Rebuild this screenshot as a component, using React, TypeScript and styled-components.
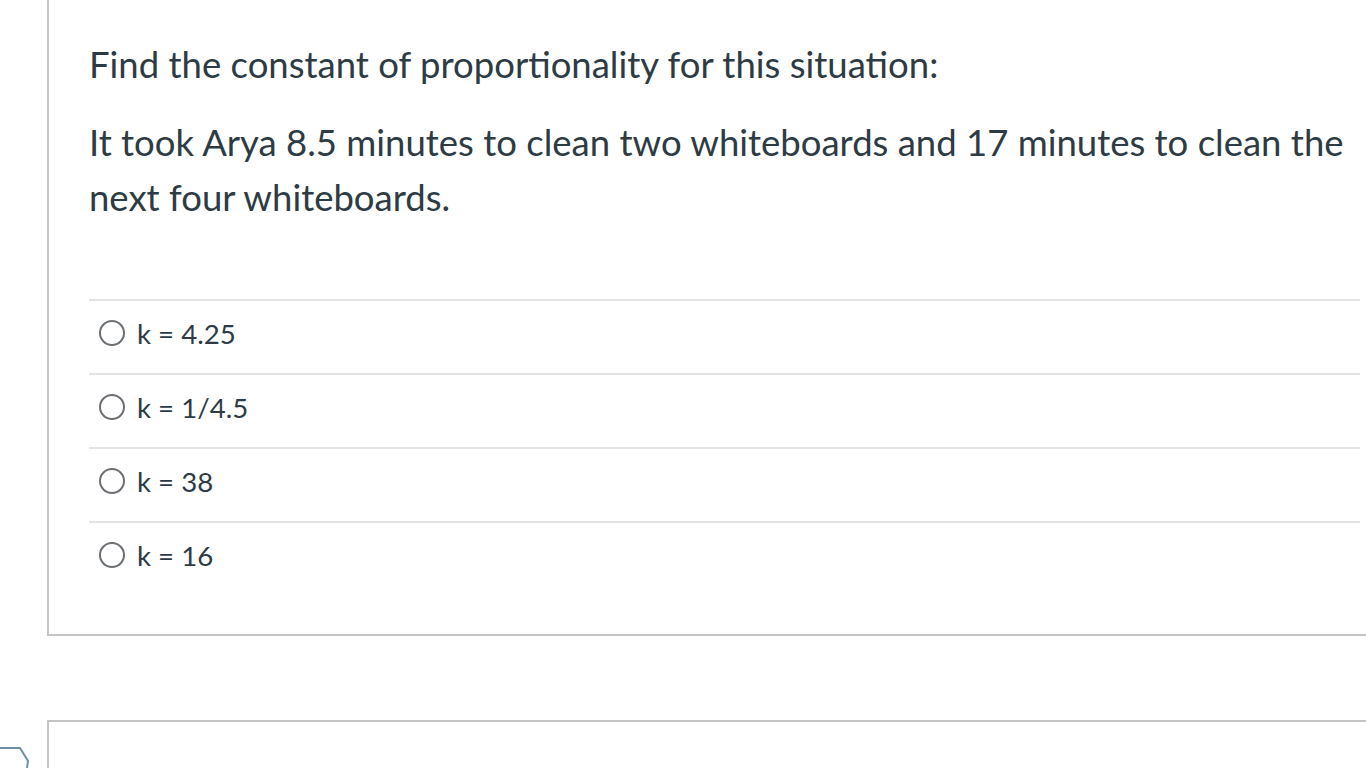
import React from "react";
import styled, { createGlobalStyle } from "styled-components";

const Global = createGlobalStyle`
  html, body { margin: 0; padding: 0; background: #ffffff; }
  body { font-family: Lato, "Open Sans", sans-serif; color: #2d3b45; overflow: hidden; }
`;

const Page = styled.div`
  position: relative;
  width: 1366px;
  height: 768px;
  overflow: hidden;
  padding-left: 47px;
  box-sizing: border-box;
`;

const Card = styled.section`
  border: 2px solid #c4c4c4;
  border-top: 0;
  border-right: 0;
  box-sizing: border-box;
  padding: 38px 0 39px 40px;
`;

const NextCard = styled.section`
  margin-top: 84px;
  height: 80px;
  border: 2px solid #c4c4c4;
  border-right: 0;
  border-bottom: 0;
`;

const Heading = styled.p`
  margin: 0;
  font-size: 36.5px;
  line-height: 52px;
`;

const Question = styled.p`
  margin: 25px 0 0;
  font-size: 36.5px;
  line-height: 55px;
`;

const Answers = styled.ul`
  list-style: none;
  margin: 74px 6px 0 0;
  padding: 0;
`;

const Answer = styled.li`
  display: flex;
  align-items: center;
  gap: 12px;
  height: 64px;
  padding: 0 0 8px 10px;
  box-sizing: content-box;
  border-top: 2px solid #e3e3e3;
  font-size: 27.6px;
`;

const Radio = styled.span`
  width: 22px;
  height: 22px;
  border-radius: 50%;
  border: 2px solid #6b6f73;
  flex: none;
`;

const Corner = styled.svg`
  position: absolute;
  left: 0;
  bottom: 0;
`;

const options = ["k = 4.25", "k = 1/4.5", "k = 38", "k = 16"];

export default function App() {
  return (
    <Page>
      <Global />
      <Card>
        <Heading>Find the constant of proportionality for this situation:</Heading>
        <Question>
          It took Arya 8.5 minutes to clean two whiteboards and 17 minutes to clean the next four whiteboards.
        </Question>
        <Answers>
          {options.map((o) => (
            <Answer key={o}>
              <Radio />
              {o}
            </Answer>
          ))}
        </Answers>
      </Card>
      <NextCard />
      <Corner width="40" height="22" viewBox="0 0 40 22">
        <path d="M-2 2 H20 L28 15 L27 22" fill="none" stroke="#6f90a4" strokeWidth="2" />
      </Corner>
    </Page>
  );
}
